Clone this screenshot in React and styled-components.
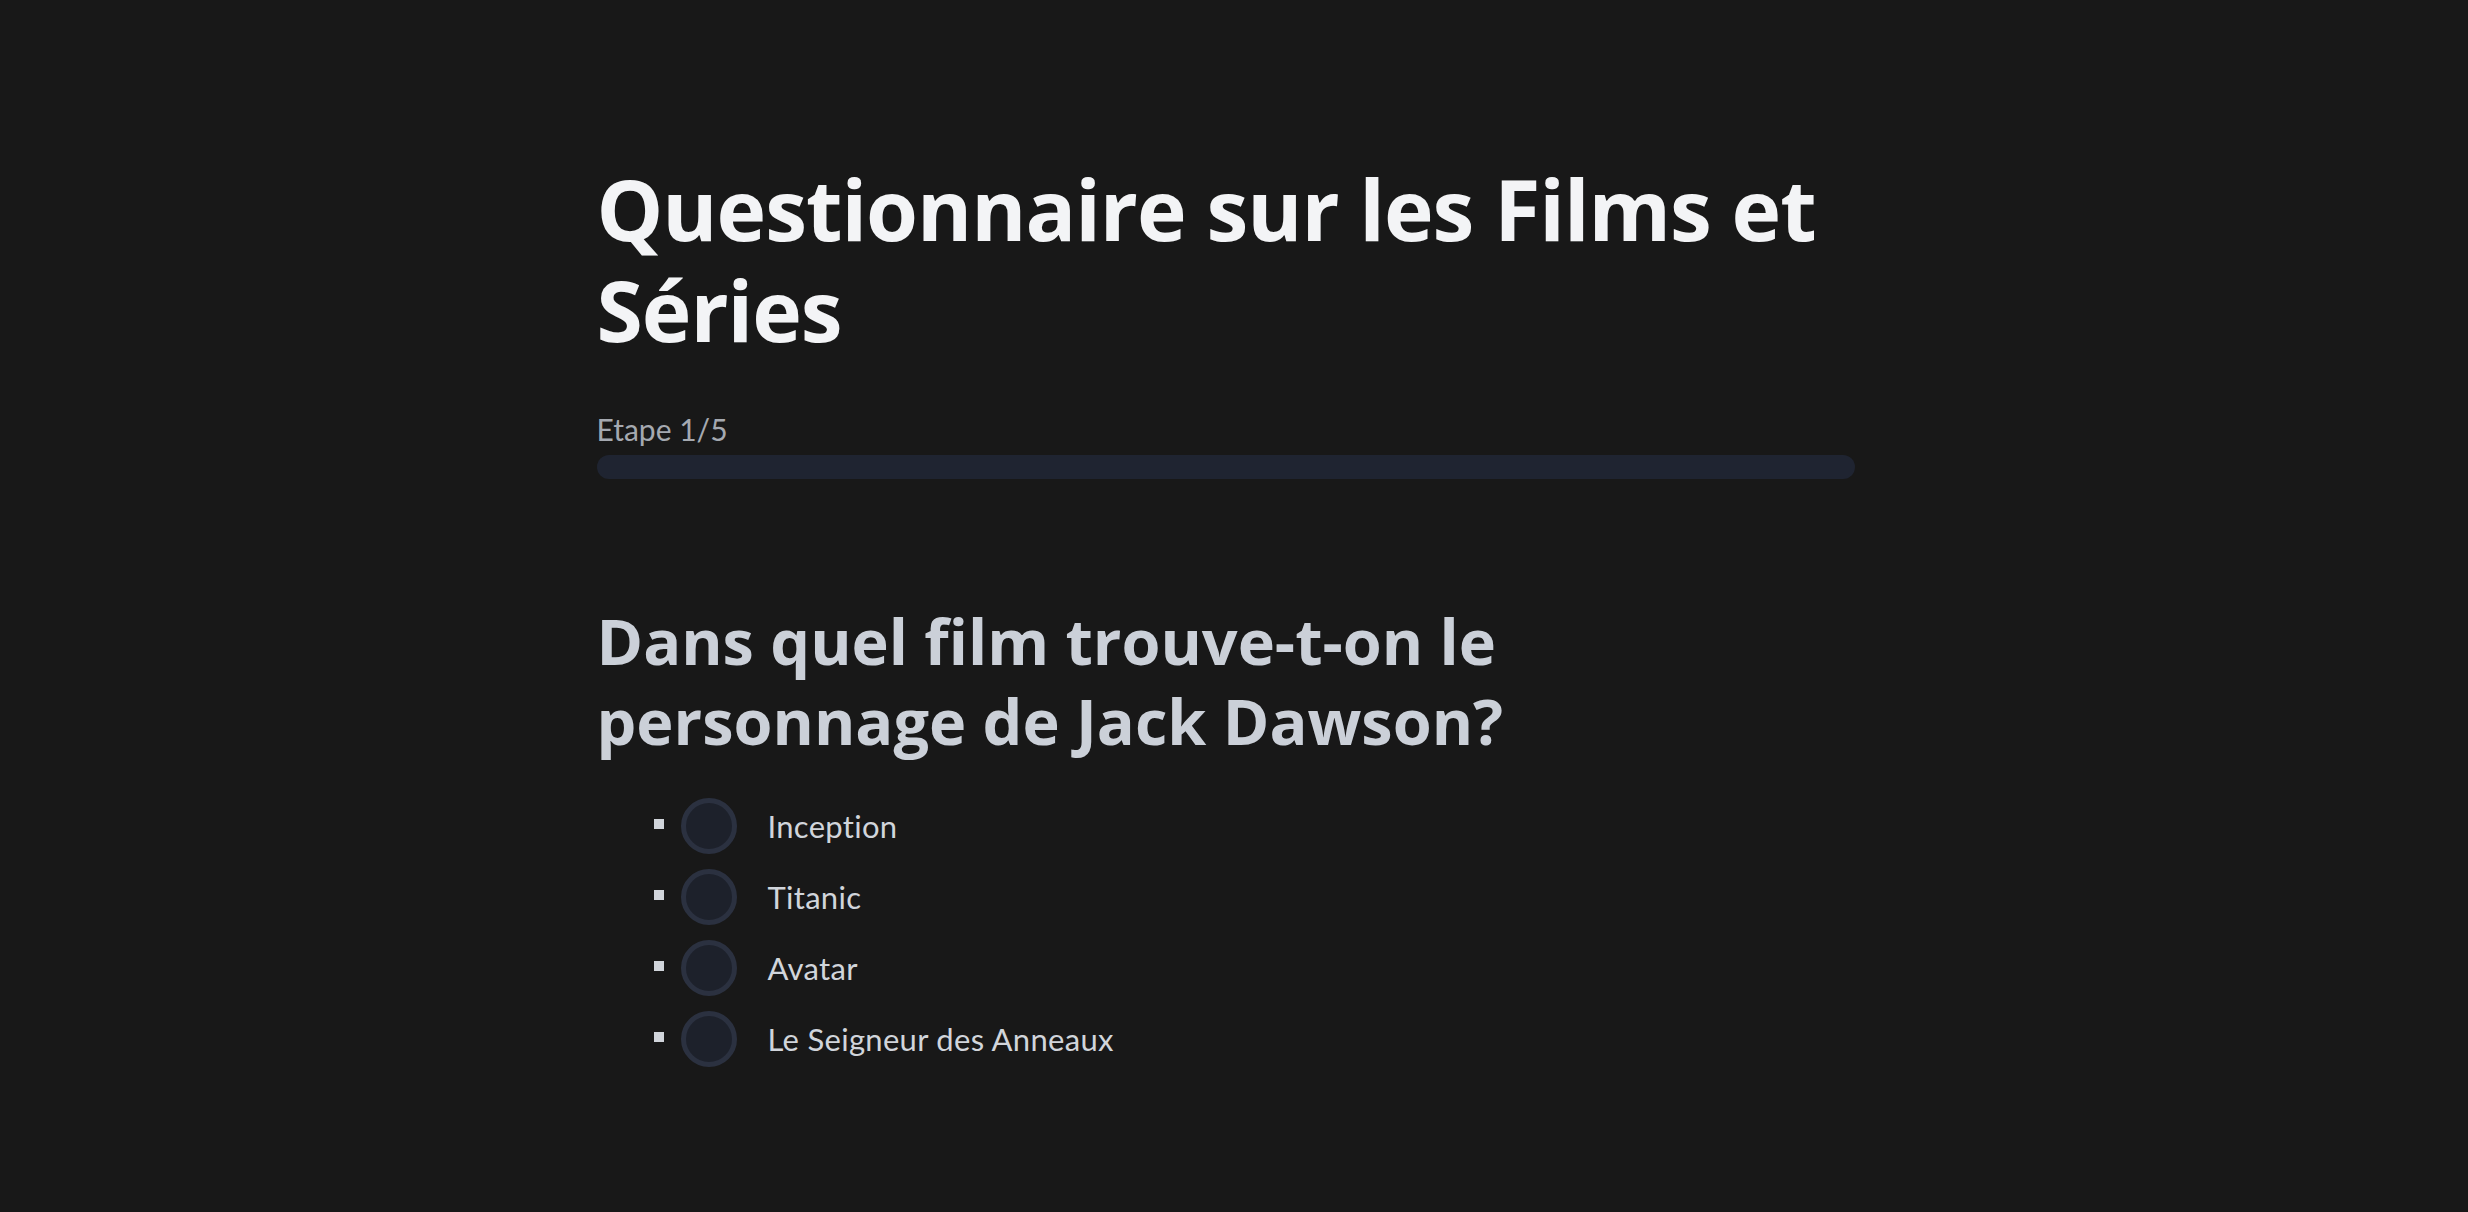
import React from 'react'
import styled, { createGlobalStyle } from 'styled-components'

const GlobalStyle = createGlobalStyle`
  html, body {
    margin: 0;
    padding: 0;
    background: #181818;
  }
  body {
    font-family: "Segoe UI", Lato, "Noto Sans", sans-serif;
    font-variant-ligatures: no-common-ligatures;
    color: #d1d5db;
  }
`

// the reference viewport had a scrollbar, so the column sits ~8px left of centre
const Page = styled.main`
  min-height: 1212px;
  display: flex;
  justify-content: center;
  padding-right: 17px;
`

const Quiz = styled.section`
  width: 1258px;
  padding-top: 158px;
`

const Title = styled.h1`
  margin: 0;
  font-family: "Segoe UI", "Open Sans", sans-serif;
  font-size: 84px;
  line-height: 101px;
  font-weight: 700;
  letter-spacing: -1px;
  color: #f3f4f6;
`

const Progress = styled.div`
  margin-top: 49px;
  display: flex;
  flex-direction: column;
  gap: 6px;
`

const StepLabel = styled.span`
  font-size: 30px;
  line-height: 40px;
  color: #a5a9b0;
`

const Track = styled.div`
  height: 24px;
  border-radius: 12px;
  background: #1f2431;
`

const Question = styled.h2`
  margin: 122px 0 0;
  max-width: 1100px;
  font-family: "Segoe UI", "Open Sans", sans-serif;
  font-size: 63px;
  line-height: 80px;
  font-weight: 700;
  letter-spacing: 0;
  color: #cbd0d8;
`

const Options = styled.ul`
  margin: 30px 0 0;
  padding-left: 84px;
  list-style: square;
  color: #d1d5db;
`

const Option = styled.li`
  font-size: 31px;
  line-height: 40px;
  letter-spacing: 0.3px;
  padding: 7px 0 8px;
`

const Label = styled.label`
  display: inline-flex;
  align-items: center;
  gap: 31px;
  vertical-align: middle;
  cursor: pointer;
`

const Radio = styled.input.attrs({ type: 'radio' })`
  appearance: none;
  margin: 0;
  width: 56px;
  height: 56px;
  border-radius: 50%;
  border: 5px solid #2b3140;
  background: #1d212b;
  box-sizing: border-box;
  cursor: pointer;
`

const answers = ['Inception', 'Titanic', 'Avatar', 'Le Seigneur des Anneaux']

const App = () => {
  return (
    <>
      <GlobalStyle />
      <Page>
        <Quiz>
          <Title>Questionnaire sur les Films et Séries</Title>
          <Progress>
            <StepLabel>Etape 1/5</StepLabel>
            <Track />
          </Progress>
          <Question>Dans quel film trouve-t-on le personnage de Jack Dawson?</Question>
          <Options>
            {answers.map((answer) => (
              <Option key={answer}>
                <Label>
                  <Radio name="q1" value={answer} />
                  {answer}
                </Label>
              </Option>
            ))}
          </Options>
        </Quiz>
      </Page>
    </>
  )
}

export default App
